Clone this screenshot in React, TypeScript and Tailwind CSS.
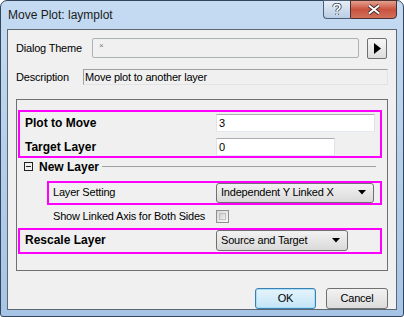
import React from "react";

function DownArrow() {
  return (
    <svg width="8" height="5" viewBox="0 0 8 5">
      <path d="M0 0 H8 L4 4.5 Z" fill="#000" />
    </svg>
  );
}

function Dropdown({ text, width }: { text: string; width: string }) {
  return (
    <div
      className={`${width} h-full flex items-center justify-between pl-[4px] pr-[7px] border border-[#707070] rounded-[3px] bg-gradient-to-b from-[#f2f2f2] to-[#dadada] text-[11px] tracking-[-0.2px]`}
    >
      <span>{text}</span>
      <DownArrow />
    </div>
  );
}

export default function App() {
  return (
    <div className="w-[404px] h-[317px] flex flex-col bg-gradient-to-b from-[#c4dbf2] via-[#b5cfeb] to-[#a6c4e6] border border-[#34465c] rounded-t-[7px] rounded-b-[3px] px-[6px] pb-[6px] font-['Liberation_Sans',sans-serif] text-black">
      {/* title bar */}
      <div className="h-[28px] flex items-start justify-between">
        <div className="pt-[7px] pl-[1px] text-[12px] leading-[15px] text-[#1b1b1b]">Move Plot: laymplot</div>
        <div className="flex -mt-[1px]">
          <div className="w-[27px] h-[19px] flex items-center justify-center border border-[#4d5f77] border-r-0 rounded-bl-[4px] bg-gradient-to-b from-[#e6eef7] to-[#b9cde3]">
            <svg width="10" height="13" viewBox="0 0 10 13">
              <path
                d="M2 4 Q2 1.5 5 1.5 Q8 1.5 8 4 Q8 5.5 6 6.5 Q5 7 5 8.5 M5 10.5 V12"
                stroke="#4a5566"
                strokeWidth="3.4"
                fill="none"
              />
              <path
                d="M2 4 Q2 1.5 5 1.5 Q8 1.5 8 4 Q8 5.5 6 6.5 Q5 7 5 8.5 M5 10.5 V12"
                stroke="#fff"
                strokeWidth="1.6"
                fill="none"
              />
            </svg>
          </div>
          <div className="w-[47px] h-[19px] flex items-center justify-center border border-[#4d3030] rounded-br-[4px] bg-gradient-to-b from-[#e3a08f] via-[#c9523f] to-[#d0705a]">
            <svg width="14" height="11" viewBox="0 0 14 11">
              <path d="M2 1.5 L12 9.5 M12 1.5 L2 9.5" stroke="#3a2a2a" strokeWidth="3.6" />
              <path d="M2 1.5 L12 9.5 M12 1.5 L2 9.5" stroke="#fff" strokeWidth="2" />
            </svg>
          </div>
        </div>
      </div>

      {/* client */}
      <div className="flex-1 flex flex-col border border-[#5e6670] bg-[#f0f0f0] text-[11px] tracking-[-0.2px]">
        {/* Dialog Theme */}
        <div className="flex items-start mt-[8px] pl-[8px]">
          <div className="w-[76px] h-[20px] flex items-center">Dialog Theme</div>
          <div className="w-[267px] h-[20px] border border-[#adb2b5] rounded-[2px] bg-[#f0f0f0] pl-[6px] text-[8px] leading-[14px] text-[#777]">
            ×
          </div>
          <div className="ml-[8px] w-[20px] h-[21px] flex items-center justify-center border border-[#707070] rounded-[2px] bg-gradient-to-b from-[#f7f7f7] to-[#dddddd]">
            <svg width="7" height="11" viewBox="0 0 7 11">
              <path d="M0 0 L7 5.5 L0 11 Z" fill="#000" />
            </svg>
          </div>
        </div>

        {/* Description */}
        <div className="flex items-center mt-[10px] pl-[8px]">
          <div className="w-[67px]">Description</div>
          <div className="w-[305px] h-[16px] border border-[#a0a0a0] border-r-[#e3e3e3] border-b-[#e3e3e3] bg-[#f0f0f0] pl-[1px] leading-[14px]">
            Move plot to another layer
          </div>
        </div>

        {/* group */}
        <div className="ml-[8px] mt-[13px] w-[372px] h-[172px] border border-[#707070] flex flex-col">
          <div className="ml-[1px] mt-[10px] w-[364px] h-[48px] border-2 border-[#ff00ff] flex flex-col pt-[2px] gap-[6px]">
            <div className="flex items-center h-[18px]">
              <div className="w-[196px] pl-[5px] text-[12px] font-bold tracking-normal">Plot to Move</div>
              <div className="w-[159px] h-full border border-[#abadb3] border-l-[#e2e3ea] border-r-[#e2e3ea] border-b-[#e3e9ef] bg-white pl-[2px] leading-[16px]">
                3
              </div>
            </div>
            <div className="flex items-center h-[18px]">
              <div className="w-[196px] pl-[5px] text-[12px] font-bold tracking-normal">Target Layer</div>
              <div className="w-[119px] h-full border border-[#abadb3] border-l-[#e2e3ea] border-r-[#e2e3ea] border-b-[#e3e9ef] bg-white pl-[2px] leading-[16px]">
                0
              </div>
            </div>
          </div>

          {/* New Layer */}
          <div className="h-[18px] flex items-center pl-[7px] pr-[11px]">
            <div className="w-[9px] h-[9px] border border-[#222] flex items-center justify-center">
              <div className="w-[5px] h-[1px] bg-[#222]" />
            </div>
            <div className="ml-[6px] text-[12px] font-bold tracking-normal">New Layer</div>
            <div className="ml-[3px] flex-1 h-[1px] bg-[#a0a0a0]" />
          </div>

          <div className="ml-[30px] mt-[5px] w-[335px] h-[24px] border-2 border-[#ff00ff] flex items-center">
            <div className="w-[167px] pl-[4px]">Layer Setting</div>
            <Dropdown text="Independent Y Linked X" width="w-[158px]" />
          </div>

          <div className="h-[23px] flex items-center pl-[36px]">
            <div className="w-[163px]">Show Linked Axis for Both Sides</div>
            <div className="w-[13px] h-[13px] border border-[#8e8f8f] bg-gradient-to-br from-[#d8d8d8] to-[#f8f8f8] p-[2px]">
              <div className="w-full h-full border border-[#c0c0c0] bg-gradient-to-br from-[#cfcfcf] to-[#f2f2f2]" />
            </div>
          </div>

          <div className="ml-[1px] w-[364px] h-[26px] border-2 border-[#ff00ff] flex items-start">
            <div className="w-[196px] h-[21px] flex items-center pl-[5px] text-[12px] font-bold tracking-normal">Rescale Layer</div>
            <div className="h-[21px]">
              <Dropdown text="Source and Target" width="w-[132px]" />
            </div>
          </div>
        </div>

        {/* buttons */}
        <div className="mt-[17px] flex justify-end gap-[10px] pr-[8px]">
          <div className="w-[61px] h-[21px] flex items-center justify-center border border-[#3c7fb1] rounded-[3px] bg-gradient-to-b from-[#e5f4fc] to-[#c4e5f6] shadow-[inset_0_0_0_1px_#a6dff7]">
            OK
          </div>
          <div className="w-[62px] h-[21px] flex items-center justify-center border border-[#707070] rounded-[3px] bg-gradient-to-b from-[#f2f2f2] to-[#dcdcdc]">
            Cancel
          </div>
        </div>
      </div>
    </div>
  );
}
